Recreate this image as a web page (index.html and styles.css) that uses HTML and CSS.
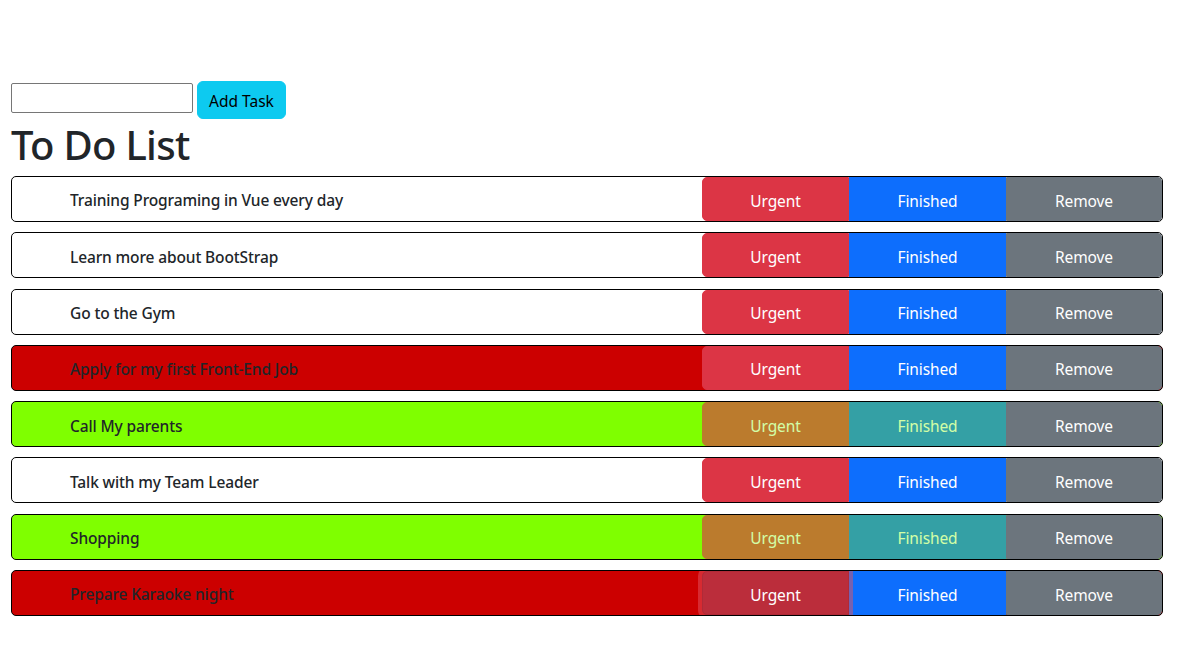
FILE: index.html
```html
<!DOCTYPE html>
<html lang="en">
<head>
<meta charset="utf-8">
<title>To Do List</title>
<link rel="stylesheet" href="styles.css">
</head>
<body>
<main class="app">
  <form class="add-form">
    <input class="add-input" type="text">
    <button class="btn btn-info" type="button">Add Task</button>
  </form>
  <h1 class="title">To Do List</h1>
  <ul class="tasks">
    <li class="task"><span class="task-text">Training Programing in Vue every day</span><div class="btn-group"><button class="btn btn-danger">Urgent</button><button class="btn btn-primary">Finished</button><button class="btn btn-secondary">Remove</button></div></li>
    <li class="task"><span class="task-text">Learn more about BootStrap</span><div class="btn-group"><button class="btn btn-danger">Urgent</button><button class="btn btn-primary">Finished</button><button class="btn btn-secondary">Remove</button></div></li>
    <li class="task"><span class="task-text">Go to the Gym</span><div class="btn-group"><button class="btn btn-danger">Urgent</button><button class="btn btn-primary">Finished</button><button class="btn btn-secondary">Remove</button></div></li>
    <li class="task task--urgent"><span class="task-text">Apply for my first Front-End Job</span><div class="btn-group"><button class="btn btn-danger">Urgent</button><button class="btn btn-primary">Finished</button><button class="btn btn-secondary">Remove</button></div></li>
    <li class="task task--done"><span class="task-text">Call My parents</span><div class="btn-group"><button class="btn btn-danger" disabled>Urgent</button><button class="btn btn-primary" disabled>Finished</button><button class="btn btn-secondary">Remove</button></div></li>
    <li class="task"><span class="task-text">Talk with my Team Leader</span><div class="btn-group"><button class="btn btn-danger">Urgent</button><button class="btn btn-primary">Finished</button><button class="btn btn-secondary">Remove</button></div></li>
    <li class="task task--done"><span class="task-text">Shopping</span><div class="btn-group"><button class="btn btn-danger" disabled>Urgent</button><button class="btn btn-primary" disabled>Finished</button><button class="btn btn-secondary">Remove</button></div></li>
    <li class="task task--urgent"><span class="task-text">Prepare Karaoke night</span><div class="btn-group"><button class="btn btn-danger is-focused">Urgent</button><button class="btn btn-primary">Finished</button><button class="btn btn-secondary">Remove</button></div></li>
  </ul>
</main>
</body>
</html>
```
FILE: styles.css
```css
* { box-sizing: border-box; }
html, body { margin: 0; padding: 0; background: #fff; }
body {
  font-family: "Noto Sans", "Open Sans", sans-serif;
  font-size: 16px;
  line-height: 1.5;
  color: #212529;
}
.app {
  padding: 81px 28px 0 11px;
}
.add-form {
  display: flex;
  align-items: flex-start;
  gap: 4px;
  margin: 0;
}
.add-input {
  width: 182px;
  height: 30px;
  margin-top: 2px;
  border: 1px solid #767676;
  border-radius: 2px;
  padding: 1px 2px;
  font: inherit;
}
.btn {
  font-family: inherit;
  font-size: 16px;
  line-height: 24px;
  border: 1px solid transparent;
  border-radius: 6px;
  padding: 6px 12px;
  color: #fff;
  cursor: pointer;
}
.btn-info {
  background: #0dcaf0;
  border-color: #0dcaf0;
  color: #000;
  width: 89px;
  height: 38px;
  padding: 7px 0 5px;
  font-size: 15.5px;
}
.title {
  margin: 2px 0 7px;
  font-size: 40px;
  line-height: 48px;
  font-weight: 500;
  letter-spacing: -0.7px;
}
.tasks {
  list-style: none;
  margin: 0;
  padding: 0;
  display: flex;
  flex-direction: column;
  gap: 10.3px;
}
.task {
  display: flex;
  align-items: stretch;
  height: 46px;
  border: 1px solid #000;
  border-radius: 5px;
  overflow: hidden;
  background: #fff;
}
.task--urgent { background: #cc0000; }
.task--done { background: #7fff00; }
.task-text {
  flex: 1;
  display: flex;
  align-items: center;
  padding: 4px 0 0 58px;
  font-weight: 500;
  font-size: 15.5px;
  letter-spacing: -0.13px;
}
.btn-group {
  display: flex;
}
.btn-group .btn {
  border-radius: 0;
  padding: 3px 0 0;
  height: 44px;
  font-size: 15.5px;
  letter-spacing: -0.1px;
}
.btn-group .btn:first-child { border-radius: 5px 0 0 5px; }
.btn-group .btn:last-child { border-radius: 0 4px 4px 0; }
.btn-danger { background: #dc3545; border-color: #dc3545; width: 147px; }
.btn-primary { background: #0d6efd; border-color: #0d6efd; width: 157px; }
.btn-secondary { background: #6c757d; border-color: #6c757d; width: 156px; }
.btn:disabled { opacity: 0.65; cursor: default; }
.btn-danger.is-focused {
  position: relative;
  z-index: 1;
  background: #bb2d3b;
  border-color: #b02a37;
  box-shadow: 0 0 0 4px rgba(225, 83, 97, 0.5);
}
```
